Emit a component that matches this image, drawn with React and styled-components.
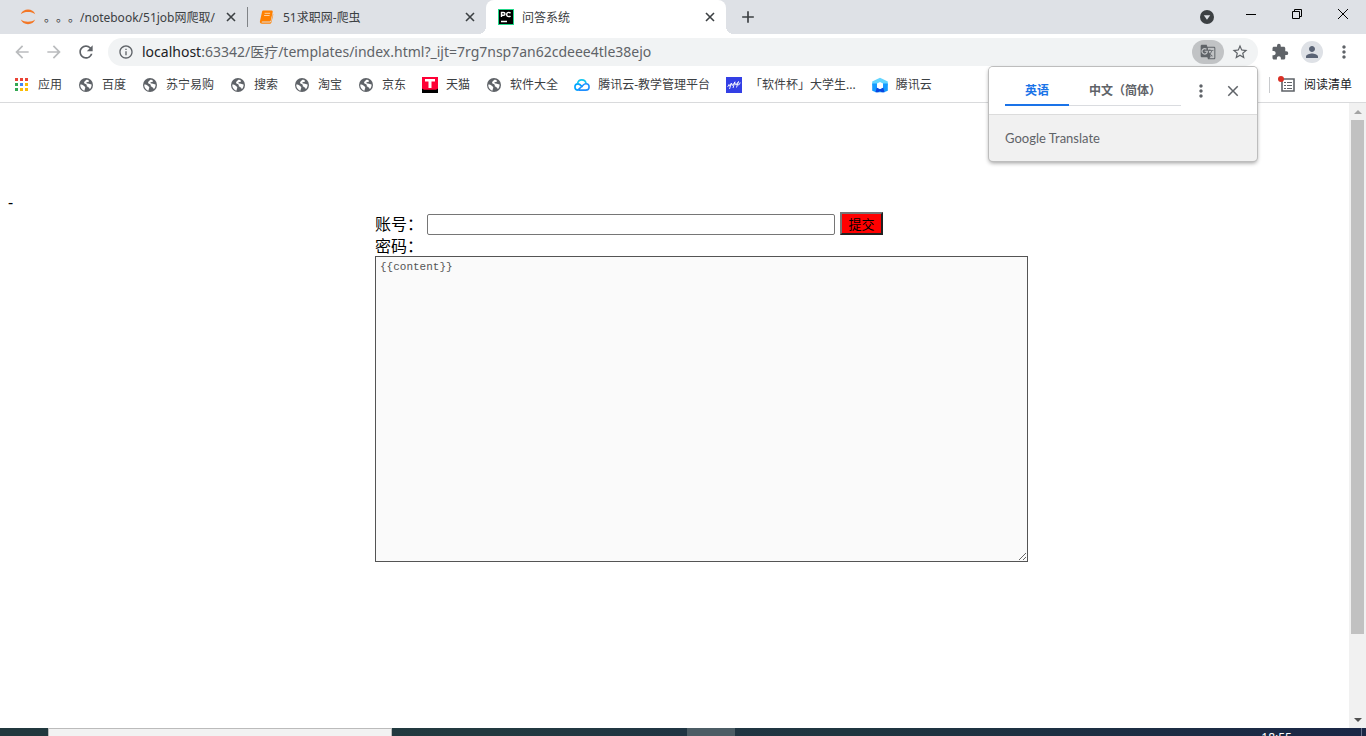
import React from 'react';
import styled, { createGlobalStyle } from 'styled-components';
import {
  MdArrowBack, MdArrowForward, MdRefresh, MdInfoOutline, MdStarBorder, MdExtension,
  MdPerson, MdMoreVert, MdClose, MdAdd, MdGTranslate,
} from 'react-icons/md';

const ui = `"Noto Sans", "Noto Sans CJK SC", sans-serif`;

const GlobalStyle = createGlobalStyle`
  *, *::before, *::after { box-sizing: border-box; }
  body { margin: 0; background: #fff; font-family: ${ui}; text-spacing-trim: space-all; overflow: hidden; }
  button, input, textarea { font-family: inherit; }
  svg { display: block; flex: none; }
`;

const Browser = styled.div`
  display: flex;
  flex-direction: column;
  height: 100vh;
`;

const IconButton = styled.button`
  display: flex;
  align-items: center;
  justify-content: center;
  flex: none;
  width: ${p => p.$width || 32}px;
  height: ${p => p.$height || 28}px;
  padding: 0;
  border: 0;
  border-radius: ${p => p.$radius || 0}px;
  background: ${p => p.$bg || 'transparent'};
  color: ${p => p.$color || '#5f6368'};
`;

/* Tab strip */
const TabStrip = styled.header`
  display: flex;
  height: 34px;
  padding-left: 8px;
  background: #dee1e6;
`;

const Tab = styled.div`
  position: relative;
  display: flex;
  align-items: center;
  width: ${p => (p.$active ? 240 : 239)}px;
  padding: 0 6px 0 12px;
  border-radius: 8px 8px 0 0;
  background: ${p => (p.$active ? '#fff' : 'transparent')};
  color: #3c4043;
  font-size: 12px;
  line-height: 18px;

  &::before, &::after {
    content: '';
    display: ${p => (p.$active ? 'block' : 'none')};
    position: absolute;
    bottom: 0;
    width: 8px;
    height: 8px;
  }
  &::before { right: 100%; background: radial-gradient(circle at 0 0, transparent 8px, #fff 8px); }
  &::after { left: 100%; background: radial-gradient(circle at 100% 0, transparent 8px, #fff 8px); }
`;

const TabTitle = styled.span`
  flex: 1;
  margin-left: 8px;
  padding-top: 2px;
  overflow: hidden;
  white-space: nowrap;
`;

const TabDivider = styled.span`
  align-self: center;
  width: 1px;
  height: 20px;
  margin-right: -1px;
  background: #808387;
`;

const WindowControls = styled.div`
  display: flex;
  margin-left: auto;
`;

/* Toolbar */
const Toolbar = styled.nav`
  display: flex;
  align-items: center;
  height: 36px;
  padding: 0 6px;
  background: #fff;
`;

const AddressBar = styled.div`
  display: flex;
  align-items: center;
  flex: 1;
  height: 28px;
  margin: 0 6px;
  padding: 0 2px 0 10px;
  border-radius: 14px;
  background: #f1f3f4;
`;

const Url = styled.span`
  flex: 1;
  margin-left: 8px;
  color: #5f6368;
  font-size: 14px;
  line-height: 20px;
  white-space: nowrap;
  b { color: #202124; font-weight: 400; }
`;

const Avatar = styled.span`
  display: flex;
  align-items: center;
  justify-content: center;
  width: 22px;
  height: 22px;
  border-radius: 50%;
  background: #dee1e6;
  color: #5a6375;
`;

/* Bookmarks */
const BookmarkBar = styled.nav`
  display: flex;
  align-items: center;
  gap: 16px;
  height: 33px;
  padding: 0 14px 3px;
  border-bottom: 1px solid #d9dadc;
`;

const Bookmark = styled.a`
  display: flex;
  align-items: center;
  gap: 8px;
  color: #3c4043;
  font-size: 12px;
  line-height: 18px;
  text-decoration: none;
  white-space: nowrap;
`;

const ReadingList = styled(Bookmark)`
  height: 16px;
  margin-left: auto;
  padding-left: 10px;
  border-left: 1px solid #c8cacd;
  color: #202124;
`;

/* Translate bubble */
const Bubble = styled.aside`
  position: absolute;
  top: 67px;
  right: 109px;
  width: 268px;
  height: 94px;
  border-radius: 4px;
  background: #f1f1f1;
  box-shadow: 0 0 0 1px #bdbdbd, 0 2px 4px rgba(0, 0, 0, 0.4);
  overflow: hidden;
`;

const BubbleHead = styled.div`
  display: flex;
  height: 48px;
  padding-left: 16px;
  border-bottom: 1px solid #dcdcdc;
  background: #fff;
`;

const LanguageTab = styled.button`
  width: ${p => p.$width}px;
  height: 39px;
  padding: ${p => (p.$active ? '10px 0 0' : '9px 0 0 20px')};
  border: 0;
  border-bottom: ${p => (p.$active ? '2px solid #1a73e8' : '1px solid #dadce0')};
  background: transparent;
  color: ${p => (p.$active ? '#1a73e8' : '#5f6368')};
  font-size: 12px;
  font-weight: 700;
  line-height: 18px;
  text-align: ${p => (p.$active ? 'center' : 'left')};
  white-space: nowrap;
`;

const BubbleActions = styled.div`
  display: flex;
  align-items: center;
  padding-left: 4px;
`;

const Brand = styled.p`
  margin: 0;
  padding: 14px 16px;
  color: #5f6368;
  font-family: Lato, sans-serif;
  font-size: 13px;
  line-height: 18px;
`;

/* Page */
const Viewport = styled.div`
  display: flex;
  flex: 1;
  min-height: 0;
`;

const Page = styled.main`
  flex: 1;
  padding: 89px 8px 0;
  color: #000;
  font-size: 16px;
  line-height: 20px;
`;

const Form = styled.form`
  margin-left: 367px;
`;

const Row = styled.div`
  display: flex;
  align-items: center;
  height: 23px;
`;

const FieldLabel = styled.label`
  display: block;
  width: 52px;
  padding-top: 2px;
  line-height: 19px;
`;

const AccountInput = styled.input`
  width: 408px;
  height: 21px;
  margin: 1px 5px 0 0;
  border: 1px solid #767676;
  border-radius: 2px;
  background: #fff;
`;

const Submit = styled.button`
  width: 43px;
  height: 23px;
  padding: 0;
  border: 2px outset #767676;
  background: #f00;
  color: #000;
  font-size: 13px;
  line-height: 18px;
`;

const Answer = styled.textarea`
  display: block;
  width: 653px;
  height: 306px;
  padding: 2px 4px;
  border: 1px solid #545454;
  background: #fafafa;
  color: #545454;
  font-family: "Liberation Mono", monospace;
  font-size: 11px;
  line-height: 16px;
  resize: both;
`;

const Scrollbar = styled.div`
  display: flex;
  flex-direction: column;
  align-items: center;
  justify-content: space-between;
  width: 17px;
  background: #f1f1f1;
`;

const ScrollTrack = styled.div`
  flex: 1;
  width: 13px;
`;

const ScrollThumb = styled.div`
  height: 87%;
  background: #c1c1c1;
`;

/* Taskbar */
const Taskbar = styled.footer`
  display: flex;
  flex: none;
  height: 8px;
  background: linear-gradient(90deg, #21383e 0%, #223a40 36%, #203543 50%, #1f3640 62%, #1a2746 100%);
  overflow: hidden;
`;

const TaskSearch = styled.div`
  width: 344px;
  margin-left: 48px;
  border: 1px solid #bbb;
  border-bottom: 0;
  background: #f2f2f2;
`;

const TaskActive = styled.div`
  width: 48px;
  margin-left: 295px;
  background: #4c5d65;
`;

const Clock = styled.time`
  margin: 3px 69px 0 auto;
  color: #fff;
  font-size: 12px;
  line-height: 14px;
`;

const PeekEdge = styled.div`
  width: 5px;
  border-left: 1px solid #67708a;
`;

const Jupyter = () => (
  <svg width="16" height="16" viewBox="0 0 16 16" fill="#f37726">
    <path d="M0.8 5.2C2 2.2 4.700 0.600 8 0.600s6 1.600 7.200 4.600C13.200 3.700 10.800 3.100 8 3.100S2.800 3.700 0.800 5.200z" />
    <path d="M0.800 10.600c1.200 3 3.900 4.600 7.200 4.600s6-1.600 7.200-4.600c-2 1.500-4.400 2.200-7.200 2.200s-5.200-.7-7.200-2.200z" />
  </svg>
);

const Book = () => (
  <svg width="16" height="16" viewBox="0 0 16 16">
    <path d="M4.200 1.500h8.300c.9 0 1.400.6 1.200 1.400l-1.900 8.600c-.1.500-.5.900-1 .9H3.400c-1 0-1.100 1.100 0 1.100h7.400c.7 0 1.200-.3 1.400-1l1.700-7.800c.4.300.4.700.3 1.200l-1.700 7.400c-.2.900-.9 1.500-1.700 1.500H3.100c-1.700 0-2.600-1.200-2.100-2.800l2-9.100c.2-.8.600-1.400 1.200-1.400z" fill="#ff8000" />
    <path d="M5.600 4.300h5.500M5.100 6.500h5.500" stroke="#ffd09b" />
  </svg>
);

const PyCharm = () => (
  <svg width="16" height="16" viewBox="0 0 16 16">
    <path fill="#21d789" d="M0 0h16v16H0z" />
    <path fill="#000" d="M1 1h14v14H1z" />
    <path d="M3.500 8V3.500h1.800q1.700 0 1.700 1.400T5.300 6.300H3.500M12.500 4.200q-.7-.8-1.700-.8-2.100 0-2.100 2.100t2.100 2.100q1 0 1.700-.7M3 12.500h6" fill="none" stroke="#fff" strokeWidth="1.400" />
  </svg>
);

const Apps = () => {
  const colors = ['#ea4335', '#ea4335', '#ea4335', '#34a853', '#4285f4', '#fbbc05', '#34a853', '#fbbc05', '#fbbc05'];
  return (
    <svg width="16" height="16" viewBox="0 0 16 16">
      {colors.map((c, i) => <rect key={i} x={1 + (i % 3) * 5} y={1 + Math.floor(i / 3) * 5} width="3" height="3" fill={c} />)}
    </svg>
  );
};

const Globe = () => (
  <svg width="16" height="16" viewBox="0 0 16 16">
    <circle cx="8" cy="8" r="7" fill="#5f6368" />
    <path d="M9.500 2.700C10.600 3.200 11.300 3.800 11 4.400c-.4.700-2.200.3-2.600 1.100-.3.700.6 1 1.500 1.100 1.700.1 2.600 1 3.700.9.100 1.900-.6 3.500-1.700 4.500-.5-.3-.5-1.100-1.100-1.500-.7-.4-1.600-.2-1.900-.9-.3-.8.200-1.500-.5-2.100-.9-.7-2.100-.6-2.300-1.700-.2-1.300 1-1.600 1.500-2.300.3-.5.600-1 1.900-.8z" fill="#fff" />
    <path d="M2.300 7.400c1.400 0 2.600.5 3.500 1.300.8.800 1.600 1 1.500 2-.1.800-.7 1-.6 2.900-2.600-.6-4.600-3-4.400-6.200z" fill="#fff" />
  </svg>
);

const Tmall = () => (
  <svg width="16" height="16" viewBox="0 0 16 16">
    <path fill="#ff0036" d="M0 0h16v14H0z" />
    <path d="M0 11.500l2 1.300h12l2-1.300V16H0z" fill="#000" />
    <path d="M3 2h10v2.500H9.500V11h-3V4.500H3z" fill="#fff" />
  </svg>
);

const Cloud = () => (
  <svg width="16" height="16" viewBox="0 0 16 16" fill="none" strokeWidth="1.600">
    <path d="M4.200 13.100C2.200 13.100.9 11.700.9 10s1.300-3.100 3.100-3.100c1.300 0 2.200.7 4.600 3.100" stroke="#00a3ff" />
    <path d="M3.500 6.700C4 4.300 5.700 2.900 7.800 2.900c2.200 0 3.900 1.400 4.300 3.600" stroke="#13c6ef" />
    <path d="M4.200 13.100h7.600c2 0 3.300-1.400 3.300-3.100s-1.300-3.200-3.100-3.200c-1.400 0-2.300.7-3.300 1.700l-4.600 4.300" stroke="#1e8fff" />
  </svg>
);

const Cup = () => (
  <svg width="16" height="16" viewBox="0 0 16 16" fill="none">
    <path fill="#333fe5" d="M0 0h16v16H0z" />
    <path d="M1.500 9.500q1 .3 1.500-2-.3 2 .8 1.500L5.500 6 3.500 12M6 6.800q-.5 2 .8 1.500L9 4.800 7 11M10 6q-1 2.500.3 2L12.500 4.500 10.500 10.500M12 8q1.600.2 2.200-2.500" stroke="#fff" strokeWidth=".9" />
  </svg>
);

const Tencent = () => (
  <svg width="16" height="16" viewBox="0 0 16 16">
    <path d="M8 .8l7.800 3.700v4H.2v-4z" fill="#63d5ff" />
    <path d="M.2 6.500H5v5.200h6V6.500h4.800v7.200L12 15.200H4L.2 13.700z" fill="#159bff" />
    <path d="M3.500 15.200l1.300-4.700L8 12.200l3.200-1.700 1.300 4.700H9.800L8 14l-1.800 1.200z" fill="#0a45e0" />
    <path d="M8 5l3 1.600v3.700L8 12l-3-1.700V6.600z" fill="#fff" />
  </svg>
);

const ReadingIcon = () => (
  <svg width="16" height="16" viewBox="0 0 16 16" overflow="visible">
    <path d="M2 2h12v12H2z" fill="#fff" stroke="#5f6368" strokeWidth="1.600" />
    <path d="M4 5.500h2M7 5.500h5M4 8.500h2M7 8.500h5M4 11.500h2M7 11.500h5" stroke="#5f6368" />
    <circle cx="1" cy="2" r="3" fill="#d93025" />
  </svg>
);

const Caret = ({ down, color }) => (
  <svg width="17" height="17" viewBox="0 0 17 17">
    <path d={down ? 'M5 7h8l-4 4z' : 'M5 11h8l-4-4z'} fill={color} />
  </svg>
);

const bookmarks = [
  ['应用', Apps], ['百度', Globe], ['苏宁易购', Globe], ['搜索', Globe], ['淘宝', Globe], ['京东', Globe],
  ['天猫', Tmall], ['软件大全', Globe], ['腾讯云-教学管理平台', Cloud], ['「软件杯」大学生...', Cup], ['腾讯云', Tencent],
];

const CloseTab = () => (
  <IconButton $width={20} $height={20} $color="#3c4043" aria-label="关闭标签页">
    <svg width="10" height="10" viewBox="0 0 10 10"><path d="M1 1l8 8M9 1L1 9" stroke="currentColor" strokeWidth="1.600" /></svg>
  </IconButton>
);

export default function App() {
  return (
    <Browser>
      <GlobalStyle />
      <TabStrip>
        <Tab><Jupyter /><TabTitle>。。。/notebook/51job网爬取/</TabTitle><CloseTab /></Tab>
        <TabDivider />
        <Tab><Book /><TabTitle>51求职网-爬虫</TabTitle><CloseTab /></Tab>
        <Tab $active><PyCharm /><TabTitle>问答系统</TabTitle><CloseTab /></Tab>
        <IconButton $width={44} $height={34} $color="#3c4043" aria-label="新标签页"><MdAdd size={20} /></IconButton>
        <WindowControls>
          <IconButton $width={42} $height={34} aria-label="搜索标签页">
            <svg width="14" height="14" viewBox="0 0 14 14"><circle cx="7" cy="7" r="7" fill="#3c4043" /><path d="M3.800 5.200h6.400L7 9.800z" fill="#dee1e6" /></svg>
          </IconButton>
          <IconButton $width={46} aria-label="最小化">
            <svg width="10" height="10" viewBox="0 0 10 10"><path d="M0 5.500h10" stroke="#000" /></svg>
          </IconButton>
          <IconButton $width={46} aria-label="还原">
            <svg width="10" height="10" viewBox="0 0 10 10" fill="none" stroke="#000"><path d="M.5 2.500h7v7h-7zM2.500 2.500v-2h7v7h-2" /></svg>
          </IconButton>
          <IconButton $width={46} aria-label="关闭">
            <svg width="10" height="10" viewBox="0 0 10 10"><path d="M0 0l10 10M10 0L0 10" stroke="#000" /></svg>
          </IconButton>
        </WindowControls>
      </TabStrip>

      <Toolbar>
        <IconButton $color="#babcbe" aria-label="后退"><MdArrowBack size={20} /></IconButton>
        <IconButton $color="#babcbe" aria-label="前进"><MdArrowForward size={20} /></IconButton>
        <IconButton aria-label="重新加载"><MdRefresh size={20} /></IconButton>
        <AddressBar>
          <MdInfoOutline size={16} color="#5f6368" />
          <Url><b>localhost</b>:63342/医疗/templates/index.html?_ijt=7rg7nsp7an62cdeee4tle38ejo</Url>
          <IconButton $height={24} $radius={12} $bg="#c1c3c5" aria-label="翻译此页"><MdGTranslate size={16} /></IconButton>
          <IconButton aria-label="收藏"><MdStarBorder size={18} /></IconButton>
        </AddressBar>
        <IconButton aria-label="扩展程序"><MdExtension size={18} /></IconButton>
        <IconButton aria-label="用户">
          <Avatar><MdPerson size={18} /></Avatar>
        </IconButton>
        <IconButton aria-label="菜单"><MdMoreVert size={20} /></IconButton>
      </Toolbar>

      <BookmarkBar>
        {bookmarks.map(([name, Icon]) => <Bookmark href="#" key={name}><Icon />{name}</Bookmark>)}
        <ReadingList href="#"><ReadingIcon />阅读清单</ReadingList>
      </BookmarkBar>

      <Bubble>
        <BubbleHead>
          <LanguageTab $width={64} $active>英语</LanguageTab>
          <LanguageTab $width={112}>中文（简体）</LanguageTab>
          <BubbleActions>
            <IconButton aria-label="翻译选项"><MdMoreVert size={20} /></IconButton>
            <IconButton aria-label="关闭翻译"><MdClose size={18} /></IconButton>
          </BubbleActions>
        </BubbleHead>
        <Brand>Google Translate</Brand>
      </Bubble>

      <Viewport>
        <Page>
          -
          <Form onSubmit={e => e.preventDefault()}>
            <Row>
              <FieldLabel htmlFor="account">账号：</FieldLabel>
              <AccountInput id="account" type="text" />
              <Submit type="submit">提交</Submit>
            </Row>
            <FieldLabel htmlFor="content">密码：</FieldLabel>
            <Answer id="content" disabled defaultValue="{{content}}" />
          </Form>
        </Page>
        <Scrollbar>
          <Caret color="#a3a3a3" />
          <ScrollTrack><ScrollThumb /></ScrollTrack>
          <Caret down color="#505050" />
        </Scrollbar>
      </Viewport>

      <Taskbar>
        <TaskSearch />
        <TaskActive />
        <Clock>18:55</Clock>
        <PeekEdge />
      </Taskbar>
    </Browser>
  );
}
